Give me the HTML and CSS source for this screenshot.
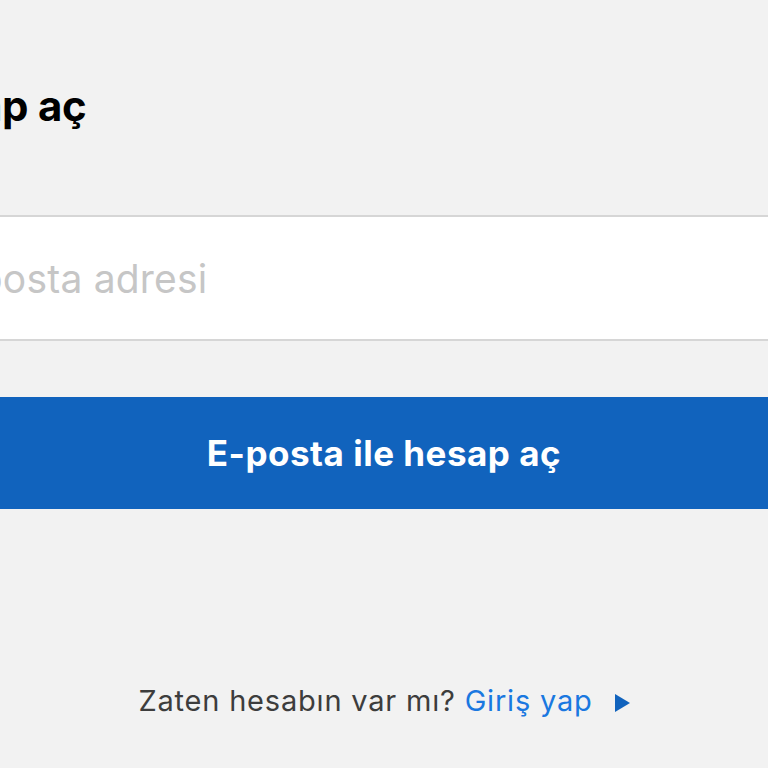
FILE: index.html
```html
<!DOCTYPE html>
<html lang="tr">
<head>
<meta charset="utf-8">
<link rel="stylesheet" href="styles.css">
</head>
<body>
<div class="page">
  <h1 class="title">Hesap aç</h1>
  <div class="field">
    <input class="email" type="email" placeholder="E-posta adresi">
  </div>
  <button class="submit">E-posta ile hesap aç</button>
  <p class="login">Zaten hesabın var mı? <a class="login-link" href="#">Giriş yap</a><span class="arrow"></span></p>
</div>
</body>
</html>
```
FILE: styles.css
```css
html, body {
  margin: 0;
  padding: 0;
  height: 100%;
  background: #f2f2f2;
  overflow: hidden;
}
body {
  display: flex;
  justify-content: center;
  font-family: Inter, "Noto Sans", sans-serif;
}
.page {
  flex: none;
  width: 970px;
  display: flex;
  flex-direction: column;
}
.title {
  margin: 78px 0 0 0;
  font-size: 42px;
  line-height: 56px;
  font-weight: 700;
  color: #000;
  letter-spacing: -0.3px;
}
.field {
  margin-top: 81px;
  border-top: 2px solid #d6d6d6;
  border-bottom: 2px solid #d6d6d6;
  background: #fff;
  height: 122px;
  display: flex;
  align-items: center;
}
.email {
  border: none;
  outline: none;
  background: transparent;
  width: 100%;
  padding: 0 0 0 38px;
  font-family: Inter, "Noto Sans", sans-serif;
  font-size: 39px;
  color: #222;
  letter-spacing: 0.2px;
}
.email::placeholder {
  color: #c6c6c6;
}
.submit {
  margin-top: 56px;
  height: 112px;
  border: none;
  background: #1163bd;
  color: #fff;
  font-family: Inter, "Noto Sans", sans-serif;
  font-size: 35px;
  font-weight: 700;
  letter-spacing: 0.5px;
  padding: 0;
}
.login {
  margin: 172px 0 0 0;
  text-align: center;
  font-size: 29px;
  letter-spacing: 0.8px;
  color: #3d3d3d;
  line-height: 40px;
}
.login-link {
  color: #1a78e0;
  text-decoration: none;
}
.arrow {
  display: inline-block;
  width: 0;
  height: 0;
  margin-left: 22px;
  border-top: 9px solid transparent;
  border-bottom: 9px solid transparent;
  border-left: 15px solid #1163bd;
  vertical-align: -1px;
}
```
